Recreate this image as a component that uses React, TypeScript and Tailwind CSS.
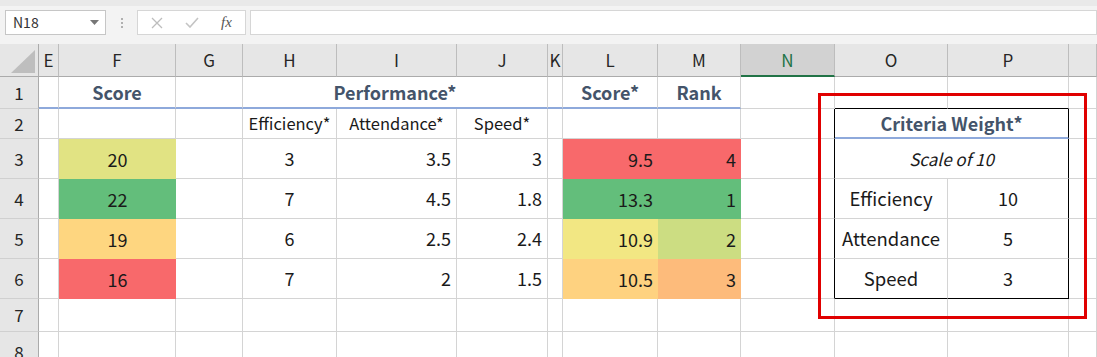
import React from "react"

type CellSpec = {
    text?: string
    span?: number
    cls?: string
}

const font = { fontFamily: '"Noto Sans CJK JP", "Noto Sans", sans-serif' }

const grid = "border-r border-b border-[#D4D4D4]"
const blue = "border-b-2 border-b-[#8EA9DB]"
const head = "font-bold text-[#44546A] text-[18px]"

const columns = ["E", "F", "G", "H", "I", "J", "K", "L", "M", "N", "O", "P", ""]

const fill = (bg: string) => `${bg} border-r-0 border-b-0`

const rows: CellSpec[][] = [
    [
        { cls: blue },
        { text: "Score", cls: `${blue} ${head} justify-center` },
        { cls: blue },
        { text: "Performance*", span: 3, cls: `${blue} ${head} justify-center` },
        { cls: blue },
        { text: "Score*", cls: `${blue} ${head} justify-center` },
        { text: "Rank", cls: `${blue} ${head} justify-center` },
        {},
        { cls: "border-b-black" },
        { cls: "border-b-black" },
        {},
    ],
    [
        {},
        {},
        {},
        { text: "Efficiency*", cls: "justify-center text-[16.5px]" },
        { text: "Attendance*", cls: "justify-center text-[16.5px]" },
        { text: "Speed*", cls: "justify-center text-[16.5px]" },
        {},
        {},
        {},
        { cls: "border-r-black" },
        { text: "Criteria Weight*", span: 2, cls: `${blue} ${head} justify-center border-r-black` },
        {},
    ],
    [
        {},
        { text: "20", cls: `${fill("bg-[#E1E383]")} justify-center` },
        {},
        { text: "3", cls: "justify-center" },
        { text: "3.5", cls: "justify-end pr-[5px]" },
        { text: "3", cls: "justify-end pr-[5px]" },
        {},
        { text: "9.5", cls: `${fill("bg-[#F8696B]")} justify-end pr-[5px]` },
        { text: "4", cls: `${fill("bg-[#F8696B]")} justify-end pr-[5px]` },
        { cls: "border-r-black" },
        { text: "Scale of 10", span: 2, cls: "justify-center italic text-[17px] border-r-black" },
        {},
    ],
    [
        {},
        { text: "22", cls: `${fill("bg-[#63BE7B]")} justify-center` },
        {},
        { text: "7", cls: "justify-center" },
        { text: "4.5", cls: "justify-end pr-[5px]" },
        { text: "1.8", cls: "justify-end pr-[5px]" },
        {},
        { text: "13.3", cls: `${fill("bg-[#63BE7B]")} justify-end pr-[5px]` },
        { text: "1", cls: `${fill("bg-[#63BE7B]")} justify-end pr-[5px]` },
        { cls: "border-r-black" },
        { text: "Efficiency", cls: "justify-center text-[18.5px]" },
        { text: "10", cls: "justify-center border-r-black" },
        {},
    ],
    [
        {},
        { text: "19", cls: `${fill("bg-[#FED680]")} justify-center` },
        {},
        { text: "6", cls: "justify-center" },
        { text: "2.5", cls: "justify-end pr-[5px]" },
        { text: "2.4", cls: "justify-end pr-[5px]" },
        {},
        { text: "10.9", cls: `${fill("bg-[#F2E783]")} justify-end pr-[5px]` },
        { text: "2", cls: `${fill("bg-[#CCDD82]")} justify-end pr-[5px]` },
        { cls: "border-r-black" },
        { text: "Attendance", cls: "justify-center text-[18.5px]" },
        { text: "5", cls: "justify-center border-r-black" },
        {},
    ],
    [
        {},
        { text: "16", cls: `${fill("bg-[#F8696B]")} justify-center` },
        {},
        { text: "7", cls: "justify-center" },
        { text: "2", cls: "justify-end pr-[5px]" },
        { text: "1.5", cls: "justify-end pr-[5px]" },
        {},
        { text: "10.5", cls: `${fill("bg-[#FED280]")} justify-end pr-[5px]` },
        { text: "3", cls: `${fill("bg-[#FDBB7B]")} justify-end pr-[5px]` },
        { cls: "border-r-black" },
        { text: "Speed", cls: "justify-center text-[18.5px] border-b-black" },
        { text: "3", cls: "justify-center border-r-black border-b-black" },
        {},
    ],
    [{}, {}, {}, {}, {}, {}, {}, {}, {}, {}, {}, {}, {}],
    [{}, {}, {}, {}, {}, {}, {}, {}, {}, {}, {}, {}, {}],
]

const spanCls: Record<number, string> = { 1: "", 2: "col-span-2", 3: "col-span-3" }

const FormulaBar = () => (
    <div className="h-[44px] bg-[#F3F3F3] border-t-[6px] border-[#E9E9E9] flex items-start pt-[4px]">
        <div className="ml-[5px] w-[101px] h-[25px] bg-white border border-[#C6C6C6] flex items-center justify-between pl-[7px] pr-[6px] text-[14px] text-[#333]">
            <span>N18</span>
            <svg width="9" height="5" viewBox="0 0 9 5">
                <path d="M0 0 L9 0 L4.5 5 Z" fill="#777" />
            </svg>
        </div>
        <div className="w-[31px] h-[25px] flex flex-col items-center justify-center gap-[2px]">
            <span className="w-[2px] h-[2px] bg-[#B0B0B0]" />
            <span className="w-[2px] h-[2px] bg-[#B0B0B0]" />
            <span className="w-[2px] h-[2px] bg-[#B0B0B0]" />
        </div>
        <div className="w-[109px] h-[25px] bg-white border border-[#D6D6D6] flex items-center">
            <svg width="12" height="12" viewBox="0 0 12 12" className="ml-[13px]">
                <path d="M1 1 L11 11 M11 1 L1 11" stroke="#BDBDBD" strokeWidth="1.3" />
            </svg>
            <svg width="14" height="11" viewBox="0 0 14 11" className="ml-[22px]">
                <path d="M1 6 L5 10 L13 1" stroke="#C4C4C4" strokeWidth="1.6" fill="none" />
            </svg>
            <span className="ml-[22px] italic text-[15px] text-[#555]" style={{ fontFamily: '"Liberation Serif", serif' }}>
                fx
            </span>
        </div>
        <div className="ml-[4px] flex-1 h-[25px] bg-white border border-[#D6D6D6]" />
    </div>
)

const App = () => {
    return (
        <div className="relative w-[1097px] h-[357px] overflow-hidden bg-white text-[18px] text-[#1A1A1A]" style={font}>
            <FormulaBar />
            <div className="grid grid-cols-[39px_20px_117px_67px_94px_120px_91px_15px_95px_83px_94px_113px_121px_1fr] grid-rows-[33px_32px_30px_40px_40px_40px_40px_33px_40px]">
                <div className="bg-[#E6E6E6] border-r border-b border-[#ABABAB] flex items-end justify-end pr-[3px] pb-[3px]">
                    <svg width="24" height="23" viewBox="0 0 24 23">
                        <path d="M24 0 L24 23 L0 23 Z" fill="#BEBEBE" />
                    </svg>
                </div>
                {columns.map((c, i) =>
                    c === "N" ? (
                        <div key={i} className="bg-[#D2D2D2] border-r border-[#BDBDBD] border-b-2 border-b-[#217346] flex items-center justify-center text-[17px] text-[#217346]">
                            {c}
                        </div>
                    ) : (
                        <div key={i} className="bg-[#E6E6E6] border-r border-b border-[#BDBDBD] border-b-[#ABABAB] flex items-center justify-center text-[17px] text-[#262626]">
                            {c}
                        </div>
                    )
                )}
                {rows.map((r, ri) => (
                    <React.Fragment key={ri}>
                        <div className="bg-[#E6E6E6] border-r border-b border-[#D0D0D0] border-r-[#ABABAB] flex items-center justify-center text-[17px] text-[#262626]">
                            {ri + 1}
                        </div>
                        {r.map((cell, ci) => (
                            <div
                                key={ci}
                                className={`${grid} flex items-center whitespace-nowrap ${spanCls[cell.span ?? 1]} ${cell.cls ?? ""}`}
                            >
                                {cell.text}
                            </div>
                        ))}
                    </React.Fragment>
                ))}
            </div>
            <div className="absolute left-[818px] top-[93px] w-[269px] h-[226px] border-[3px] border-[#E00000]" />
        </div>
    )
}

export default App
